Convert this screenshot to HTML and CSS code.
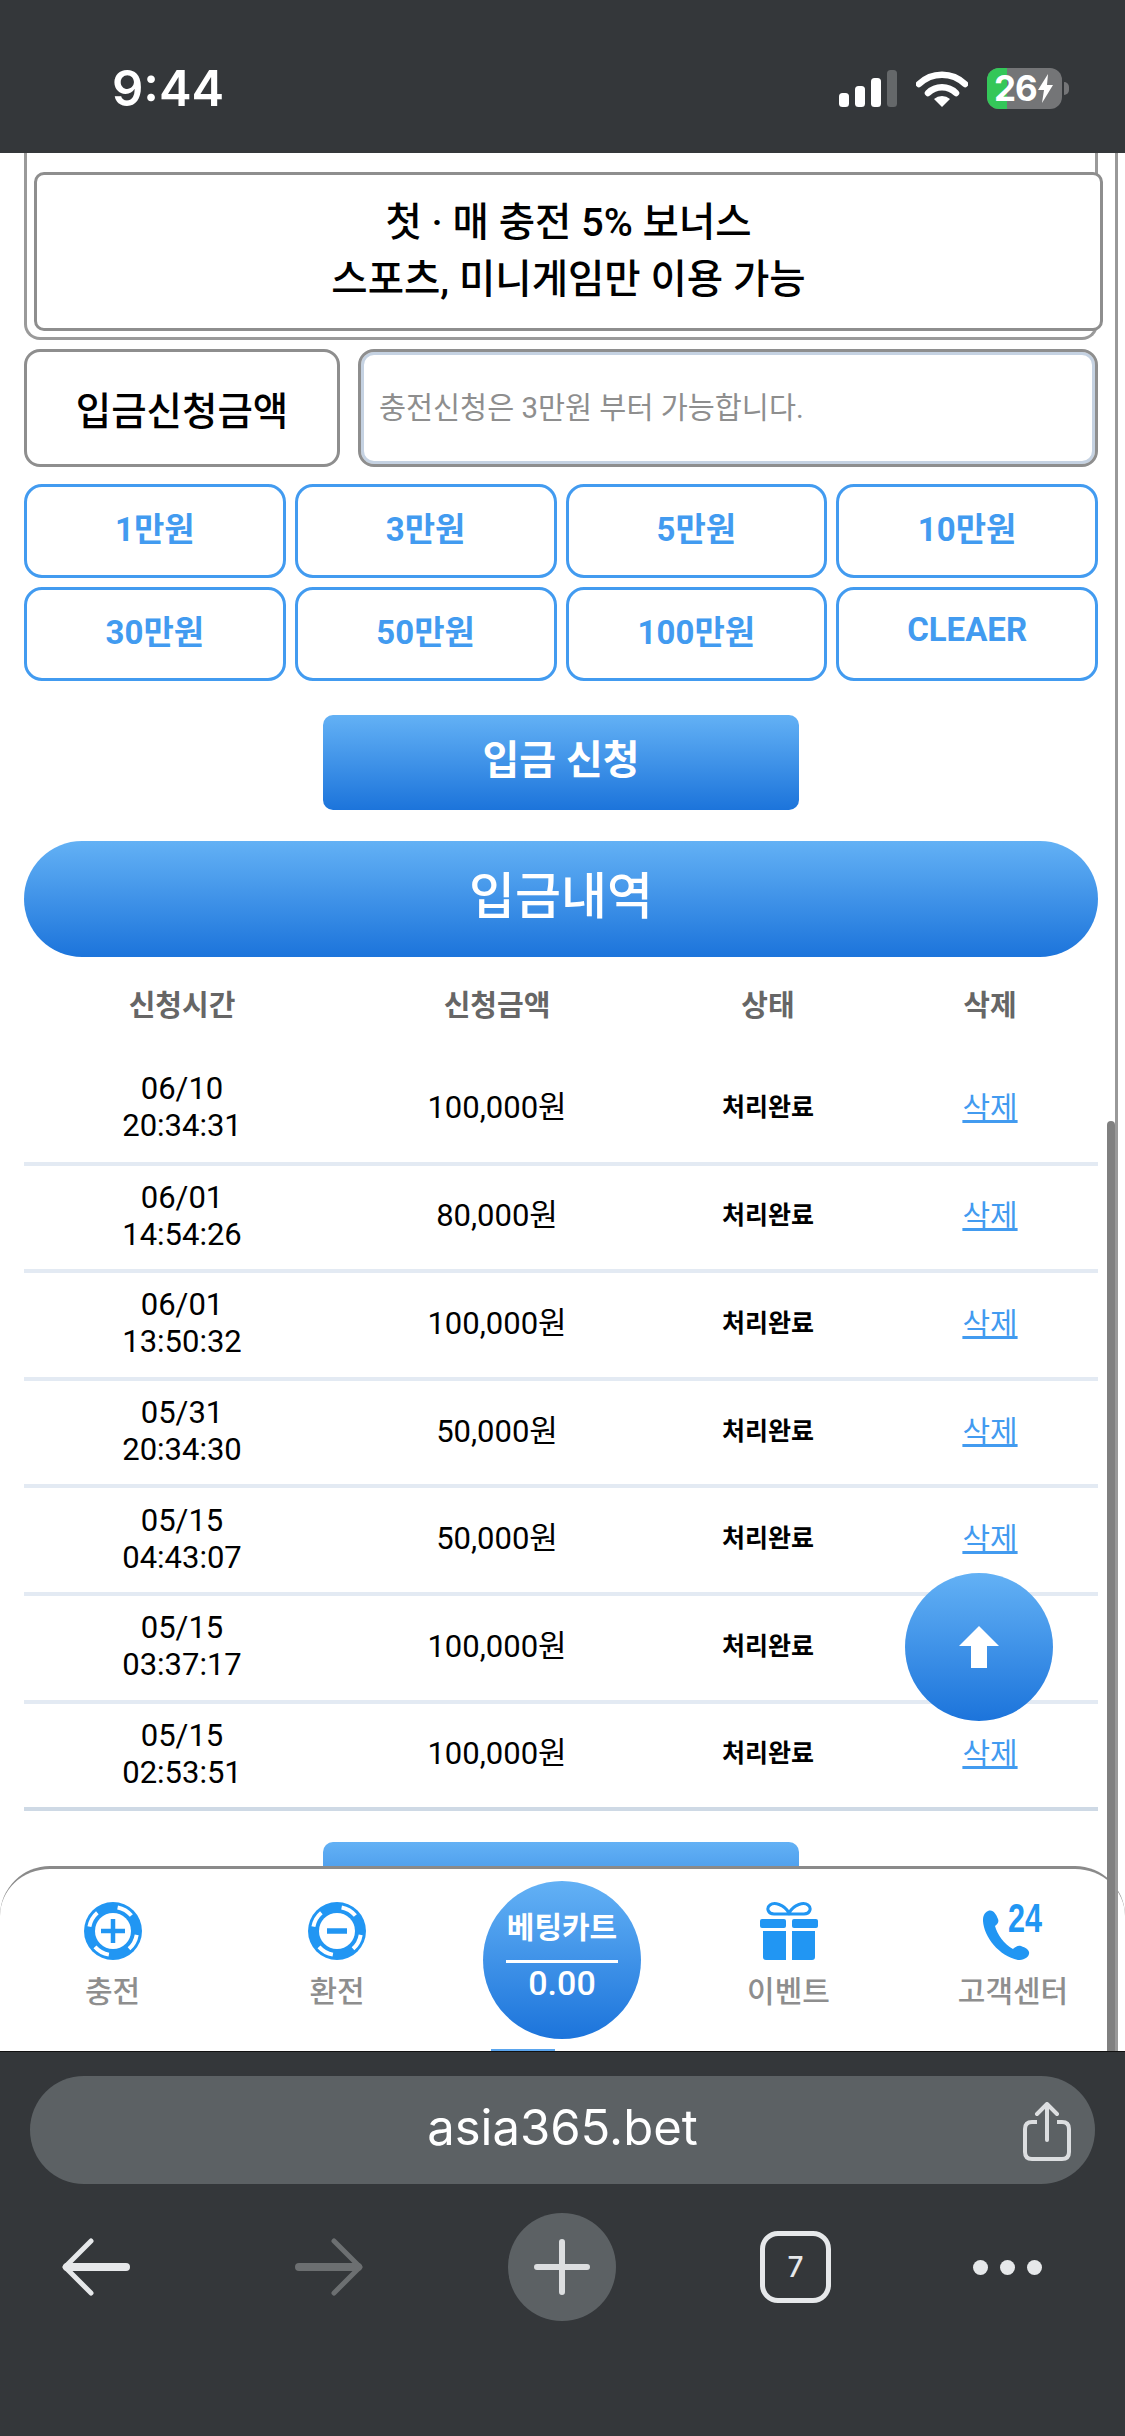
FILE: index.html
```html
<!DOCTYPE html>
<html lang="ko">
<head>
    <meta charset="UTF-8">
    <meta name="viewport" content="width=device-width, initial-scale=1.0">
    <title>입금신청</title>
    <link rel="stylesheet" href="styles.css">
</head>
<body>
    <div class="status-bar">
        <span class="clock">9:44</span>
        <div class="status-icons">
            <svg width="58" height="37" viewBox="0 0 58 37">
                <rect x="0" y="23" width="10" height="14" rx="3.5" fill="#fff"/>
                <rect x="16" y="16" width="10" height="21" rx="3.5" fill="#fff"/>
                <rect x="32" y="8" width="10" height="29" rx="3.5" fill="#fff"/>
                <rect x="48" y="0" width="10" height="37" rx="3.5" fill="#65686a"/>
            </svg>
            <svg width="52" height="37" viewBox="0 0 52 37">
                <path d="M3 14 A33 33 0 0 1 49 14" fill="none" stroke="#fff" stroke-width="6.5" stroke-linecap="round"/>
                <path d="M12 23 A20 20 0 0 1 40 23" fill="none" stroke="#fff" stroke-width="6.5" stroke-linecap="round"/>
                <path d="M18 29 A12 12 0 0 1 34 29 L26 37 Z" fill="#fff"/>
            </svg>
            <div class="battery">
                <div class="battery-fill"></div>
                <span class="battery-num">26</span>
                <svg class="battery-bolt" width="17" height="29" viewBox="0 0 17 29"><path d="M11 0 L1 16 H7 L5 29 L16 11 H10 Z" fill="#fff"/></svg>
                <div class="battery-cap"></div>
            </div>
        </div>
    </div>

    <div class="webview">
        <div class="page">
            <div class="notice-outer">
                <div class="notice">
                    <p>첫 · 매 충전 5% 보너스</p>
                    <p>스포츠, 미니게임만 이용 가능</p>
                </div>
            </div>

            <div class="amount-row">
                <div class="amount-label">입금신청금액</div>
                <input class="amount-input" type="text" placeholder="충전신청은 3만원 부터 가능합니다.">
            </div>

            <div class="quick-grid">
                <button class="quick-btn">1만원</button>
                <button class="quick-btn">3만원</button>
                <button class="quick-btn">5만원</button>
                <button class="quick-btn">10만원</button>
                <button class="quick-btn">30만원</button>
                <button class="quick-btn">50만원</button>
                <button class="quick-btn">100만원</button>
                <button class="quick-btn">CLEAER</button>
            </div>

            <button class="submit-btn">입금 신청</button>

            <h2 class="history-title">입금내역</h2>

            <table class="history">
                <thead>
                    <tr><th>신청시간</th><th>신청금액</th><th>상태</th><th>삭제</th></tr>
                </thead>
                <tbody>
                    <tr><td>06/10<br>20:34:31</td><td>100,000원</td><td class="state">처리완료</td><td><a href="#">삭제</a></td></tr>
                    <tr><td>06/01<br>14:54:26</td><td>80,000원</td><td class="state">처리완료</td><td><a href="#">삭제</a></td></tr>
                    <tr><td>06/01<br>13:50:32</td><td>100,000원</td><td class="state">처리완료</td><td><a href="#">삭제</a></td></tr>
                    <tr><td>05/31<br>20:34:30</td><td>50,000원</td><td class="state">처리완료</td><td><a href="#">삭제</a></td></tr>
                    <tr><td>05/15<br>04:43:07</td><td>50,000원</td><td class="state">처리완료</td><td><a href="#">삭제</a></td></tr>
                    <tr><td>05/15<br>03:37:17</td><td>100,000원</td><td class="state">처리완료</td><td><a href="#">삭제</a></td></tr>
                    <tr><td>05/15<br>02:53:51</td><td>100,000원</td><td class="state">처리완료</td><td><a href="#">삭제</a></td></tr>
                </tbody>
            </table>

            <button class="submit-btn submit-btn-lower"></button>
        </div>

        <button class="to-top">
            <svg width="42" height="42" viewBox="0 0 42 42"><path d="M21 0 L41 20 H29 V42 H13 V20 H1 Z" fill="#fff"/></svg>
        </button>

        <div class="peek"></div>

        <nav class="tabbar">
            <a class="tab" href="#">
                <svg width="58" height="58" viewBox="0 0 58 58">
                    <circle cx="29" cy="29" r="29" fill="#2196f3"/>
                    <circle cx="29" cy="29" r="24" fill="none" stroke="#fff" stroke-width="4" stroke-dasharray="16 21.7" stroke-dashoffset="-4"/>
                    <circle cx="29" cy="29" r="18" fill="#fff"/>
                    <path d="M29 17 V41 M17 29 H41" stroke="#2196f3" stroke-width="4.5"/>
                </svg>
                <span>충전</span>
            </a>
            <a class="tab" href="#">
                <svg width="58" height="58" viewBox="0 0 58 58">
                    <circle cx="29" cy="29" r="29" fill="#2196f3"/>
                    <circle cx="29" cy="29" r="24" fill="none" stroke="#fff" stroke-width="4" stroke-dasharray="16 21.7" stroke-dashoffset="-4"/>
                    <circle cx="29" cy="29" r="18" fill="#fff"/>
                    <path d="M19 29 H39" stroke="#2196f3" stroke-width="5.5"/>
                </svg>
                <span>환전</span>
            </a>
            <a class="tab tab-cart" href="#">
                <span class="cart-name">베팅카트</span>
                <span class="cart-value">0.00</span>
            </a>
            <a class="tab" href="#">
                <svg width="58" height="58" viewBox="0 0 58 58">
                    <path d="M29 11 C24 2 14 0 10 3 C6 6 8 12 14 12 H44 C50 12 52 6 48 3 C44 0 34 2 29 11 Z" fill="none" stroke="#2196f3" stroke-width="3"/>
                    <rect x="0" y="17" width="26" height="9" rx="2" fill="#2196f3"/>
                    <rect x="32" y="17" width="26" height="9" rx="2" fill="#2196f3"/>
                    <path d="M3 29 H26 V58 H6 Q3 58 3 55 Z" fill="#2196f3"/>
                    <path d="M32 29 H55 V55 Q55 58 52 58 H32 Z" fill="#2196f3"/>
                </svg>
                <span>이벤트</span>
            </a>
            <a class="tab" href="#">
                <svg class="phone-icon" width="60" height="58" viewBox="0 0 60 58">
                    <path d="M5 9 C1 11 0 14 0 19 C1 35 16 54 35 58 C40 58 45 56 46 52 C47 48 43 46 38 44 C35 43 32 45 30 47 C21 42 14 32 12 24 C15 22 16 20 15 17 C13 12 10 7 5 9 Z" fill="#2196f3"/>
                    <text class="phone-24" transform="translate(25 30) scale(0.745 1)">24</text>
                </svg>
                <span>고객센터</span>
            </a>
        </nav>

        <div class="scroll-line"></div>
        <div class="scroll-thumb"></div>
    </div>

    <div class="safari">
        <div class="url-bar">
            <span class="url-text">asia365.bet</span>
            <svg class="share" width="48" height="60" viewBox="0 0 48 60">
                <path d="M14 20 H9 Q2 20 2 27 V50 Q2 57 9 57 H39 Q46 57 46 50 V27 Q46 20 39 20 H34" fill="none" stroke="#dcdee0" stroke-width="4"/>
                <path d="M24 38 V3 M14 12 L24 2 L34 12" fill="none" stroke="#dcdee0" stroke-width="4" stroke-linecap="round" stroke-linejoin="round"/>
            </svg>
        </div>
        <div class="safari-tools">
            <svg width="68" height="58" viewBox="0 0 68 58">
                <path d="M29 3 L3 29 L29 55" fill="none" stroke="#e6e8ea" stroke-width="5" stroke-linecap="round" stroke-linejoin="round"/>
                <path d="M5 29 H64" fill="none" stroke="#e6e8ea" stroke-width="8" stroke-linecap="round"/>
            </svg>
            <svg width="68" height="58" viewBox="0 0 68 58">
                <path d="M39 3 L65 29 L39 55" fill="none" stroke="#6c6f71" stroke-width="5" stroke-linecap="round" stroke-linejoin="round"/>
                <path d="M4 29 H63" fill="none" stroke="#6c6f71" stroke-width="8" stroke-linecap="round"/>
            </svg>
            <div class="new-tab">
                <svg width="56" height="56" viewBox="0 0 56 56"><path d="M28 3 V53 M3 28 H53" stroke="#dcdee0" stroke-width="6" stroke-linecap="round"/></svg>
            </div>
            <div class="tab-count">7</div>
            <div class="more-dots"><i></i><i></i><i></i></div>
        </div>
    </div>
</body>
</html>
```

FILE: styles.css
```css
* {
    box-sizing: border-box;
}

html, body {
    margin: 0;
    padding: 0;
}

body {
    width: 1125px;
    height: 2436px;
    display: flex;
    flex-direction: column;
    overflow: hidden;
    background-color: #34373a;
    font-family: Roboto, "Noto Sans CJK KR", sans-serif;
}

button {
    font-family: inherit;
    padding: 0;
}

/* status bar */
.status-bar {
    height: 153px;
    flex: none;
    display: flex;
    justify-content: space-between;
    align-items: center;
    padding: 23px 63px 0 112px;
    background-color: #34373a;
}

.clock {
    color: #fff;
    font-family: Inter, sans-serif;
    font-size: 49px;
    font-weight: 600;
}

.status-icons {
    display: flex;
    align-items: center;
    gap: 19px;
}

.battery {
    position: relative;
    width: 75px;
    height: 41px;
    border-radius: 12px;
    background-color: #747577;
    display: flex;
    align-items: center;
    padding-left: 7px;
}

.battery-fill {
    position: absolute;
    left: 0;
    top: 0;
    width: 20px;
    height: 41px;
    border-radius: 12px 0 0 12px;
    background-color: #34c759;
}

.battery-num {
    position: relative;
    color: #fff;
    font-family: Inter, sans-serif;
    font-size: 35px;
    font-weight: 700;
    line-height: 41px;
    letter-spacing: -1px;
}

.battery-bolt {
    position: relative;
    flex: none;
}

.battery-cap {
    position: absolute;
    right: -7px;
    top: 14px;
    width: 5px;
    height: 13px;
    border-radius: 0 6px 6px 0;
    background-color: #747577;
}

/* web content */
.webview {
    position: relative;
    flex: 1;
    overflow: hidden;
    background-color: #fff;
    border-bottom: 1px solid #111;
}

.page {
    padding: 0 27px 0 24px;
}

.notice-outer {
    height: 187px;
    padding-top: 19px;
    border: 3px solid #9a9a9a;
    border-top: none;
    border-radius: 0 0 16px 16px;
    background-color: #fff;
}

.notice {
    height: 159px;
    margin: 0 -8px 0 7px;
    border: 3px solid #8e8e8e;
    border-radius: 10px;
    background-color: #fff;
    color: #000;
    font-size: 39.5px;
    font-weight: 500;
    text-align: center;
    display: flex;
    flex-direction: column;
    justify-content: center;
    gap: 9px;
}

.notice p {
    margin: 0;
    line-height: 48px;
}

.amount-row {
    display: flex;
    gap: 18px;
    margin-top: 9px;
}

.amount-label {
    width: 316px;
    height: 118px;
    border: 3px solid #8e8e8e;
    border-radius: 16px;
    display: flex;
    align-items: center;
    justify-content: center;
    color: #000;
    font-size: 38.5px;
    font-weight: 500;
}

.amount-input {
    flex: 1;
    height: 118px;
    min-width: 0;
    padding: 0 18px;
    border: 3px solid #8e8e8e;
    border-radius: 16px;
    box-shadow: inset 0 0 0 3px #c5d2e2;
    font-family: inherit;
    font-size: 29.4px;
    outline: none;
}

.amount-input::placeholder {
    color: #8e8e8e;
}

.quick-grid {
    display: grid;
    grid-template-columns: repeat(4, 1fr);
    gap: 9px;
    margin-top: 17px;
}

.quick-btn {
    height: 94px;
    border: 3px solid #429bf0;
    border-radius: 18px;
    background-color: #fff;
    color: #429bf0;
    font-size: 33px;
    font-weight: 700;
    padding-bottom: 9px;
}

.submit-btn {
    display: block;
    width: 476px;
    height: 95px;
    margin: 34px auto 0;
    padding-bottom: 12px;
    border: none;
    border-radius: 10px;
    background: linear-gradient(to bottom, #63b1f5, #1c74db);
    color: #fff;
    font-size: 40px;
    font-weight: 700;
}

.submit-btn-lower {
    margin-top: 31px;
}

.history-title {
    height: 116px;
    margin: 31px 0 0;
    border-radius: 58px;
    background: linear-gradient(to bottom, #63b1f5, #1c74db);
    color: #fff;
    font-size: 50px;
    font-weight: 500;
    line-height: 112px;
    text-align: center;
}

/* history table */
.history {
    width: 100%;
    border-collapse: collapse;
    table-layout: fixed;
}

.history th {
    height: 99px;
    padding: 0 0 7px;
    color: #666;
    font-size: 29px;
    font-weight: 700;
    text-align: center;
}

.history th:nth-child(1) { width: 316px; }
.history th:nth-child(2) { width: 314px; }
.history th:nth-child(3) { width: 228px; }

.history td {
    height: 107.6px;
    padding: 0 0 3px;
    border-bottom: 4px solid #e3eaf3;
    color: #000;
    font-size: 31px;
    line-height: 37px;
    text-align: center;
}

.history tr:last-child td {
    border-bottom-color: #ced9e5;
}

.history td.state {
    font-size: 25px;
    font-weight: 700;
}

.history a {
    color: #429bf0;
    font-size: 30px;
}

.scroll-line {
    position: absolute;
    right: 7px;
    top: 0;
    bottom: 0;
    width: 3px;
    background-color: #999;
}

.scroll-thumb {
    position: absolute;
    right: 10px;
    top: 968px;
    bottom: 0;
    width: 8px;
    background-color: #808080;
    border-radius: 5px 5px 0 0;
}

.to-top {
    position: absolute;
    left: 905px;
    top: 1420px;
    width: 148px;
    height: 148px;
    border: none;
    border-radius: 50%;
    background: linear-gradient(to bottom, #63b1f5, #1c74db);
    display: flex;
    align-items: center;
    justify-content: center;
}

/* bit of the page showing under the tab bar */
.peek {
    position: absolute;
    left: 491px;
    bottom: 0;
    width: 64px;
    height: 2px;
    background-color: #5aa5ee;
}

/* bottom tab bar */
.tabbar {
    position: absolute;
    left: 0;
    right: 0;
    bottom: 2px;
    height: 183px;
    display: grid;
    grid-template-columns: 225px 224px 227px 225px 224px;
    border-top: 3px solid #8a8a8a;
    border-radius: 50px 50px 0 0;
    background-color: #fff;
}

.tab {
    display: flex;
    flex-direction: column;
    align-items: center;
    padding-top: 33px;
    gap: 10px;
    color: #8e8e8e;
    font-size: 30px;
    font-weight: 500;
    line-height: 44px;
    text-decoration: none;
}

.tab-cart {
    width: 158px;
    height: 158px;
    margin: 12px 0 0 34px;
    padding-top: 25px;
    gap: 0;
    border-radius: 50%;
    background: linear-gradient(to bottom, #63b1f5, #1c74db);
    color: #fff;
}

.cart-name {
    width: 112px;
    padding-bottom: 10px;
    border-bottom: 3px solid #fff;
    font-size: 30px;
    font-weight: 700;
    line-height: 44px;
    white-space: nowrap;
    text-align: center;
}

.cart-value {
    font-size: 34px;
    font-weight: 500;
    line-height: 40px;
}

.phone-icon {
    overflow: visible;
}

.phone-24 {
    fill: #2196f3;
    font-family: "Liberation Sans", sans-serif;
    font-size: 41px;
    font-weight: 700;
}

/* safari toolbar */
.safari {
    height: 384px;
    flex: none;
    padding: 24px 30px 0;
    background-color: #34373a;
}

.url-bar {
    position: relative;
    height: 108px;
    border-radius: 54px;
    background-color: #5c6164;
    display: flex;
    align-items: center;
    justify-content: center;
}

.url-text {
    color: #fff;
    font-family: Inter, sans-serif;
    font-size: 49px;
    padding-bottom: 6px;
}

.share {
    position: absolute;
    right: 24px;
    top: 26px;
}

.safari-tools {
    display: grid;
    grid-template-columns: 233px 213px 252px 213px auto;
    align-items: center;
    height: 108px;
    margin-top: 29px;
    padding-left: 32px;
}

.new-tab {
    width: 108px;
    height: 108px;
    border-radius: 50%;
    background-color: #5c6164;
    display: flex;
    align-items: center;
    justify-content: center;
}

.tab-count {
    width: 71px;
    height: 72px;
    border: 5px solid #e6e8ea;
    border-radius: 18px;
    display: flex;
    align-items: center;
    justify-content: center;
    color: #e6e8ea;
    font-family: Inter, sans-serif;
    font-size: 28px;
    font-weight: 500;
}

.more-dots {
    display: flex;
    gap: 12px;
}

.more-dots i {
    width: 15px;
    height: 15px;
    border-radius: 50%;
    background-color: #e6e8ea;
}
```
